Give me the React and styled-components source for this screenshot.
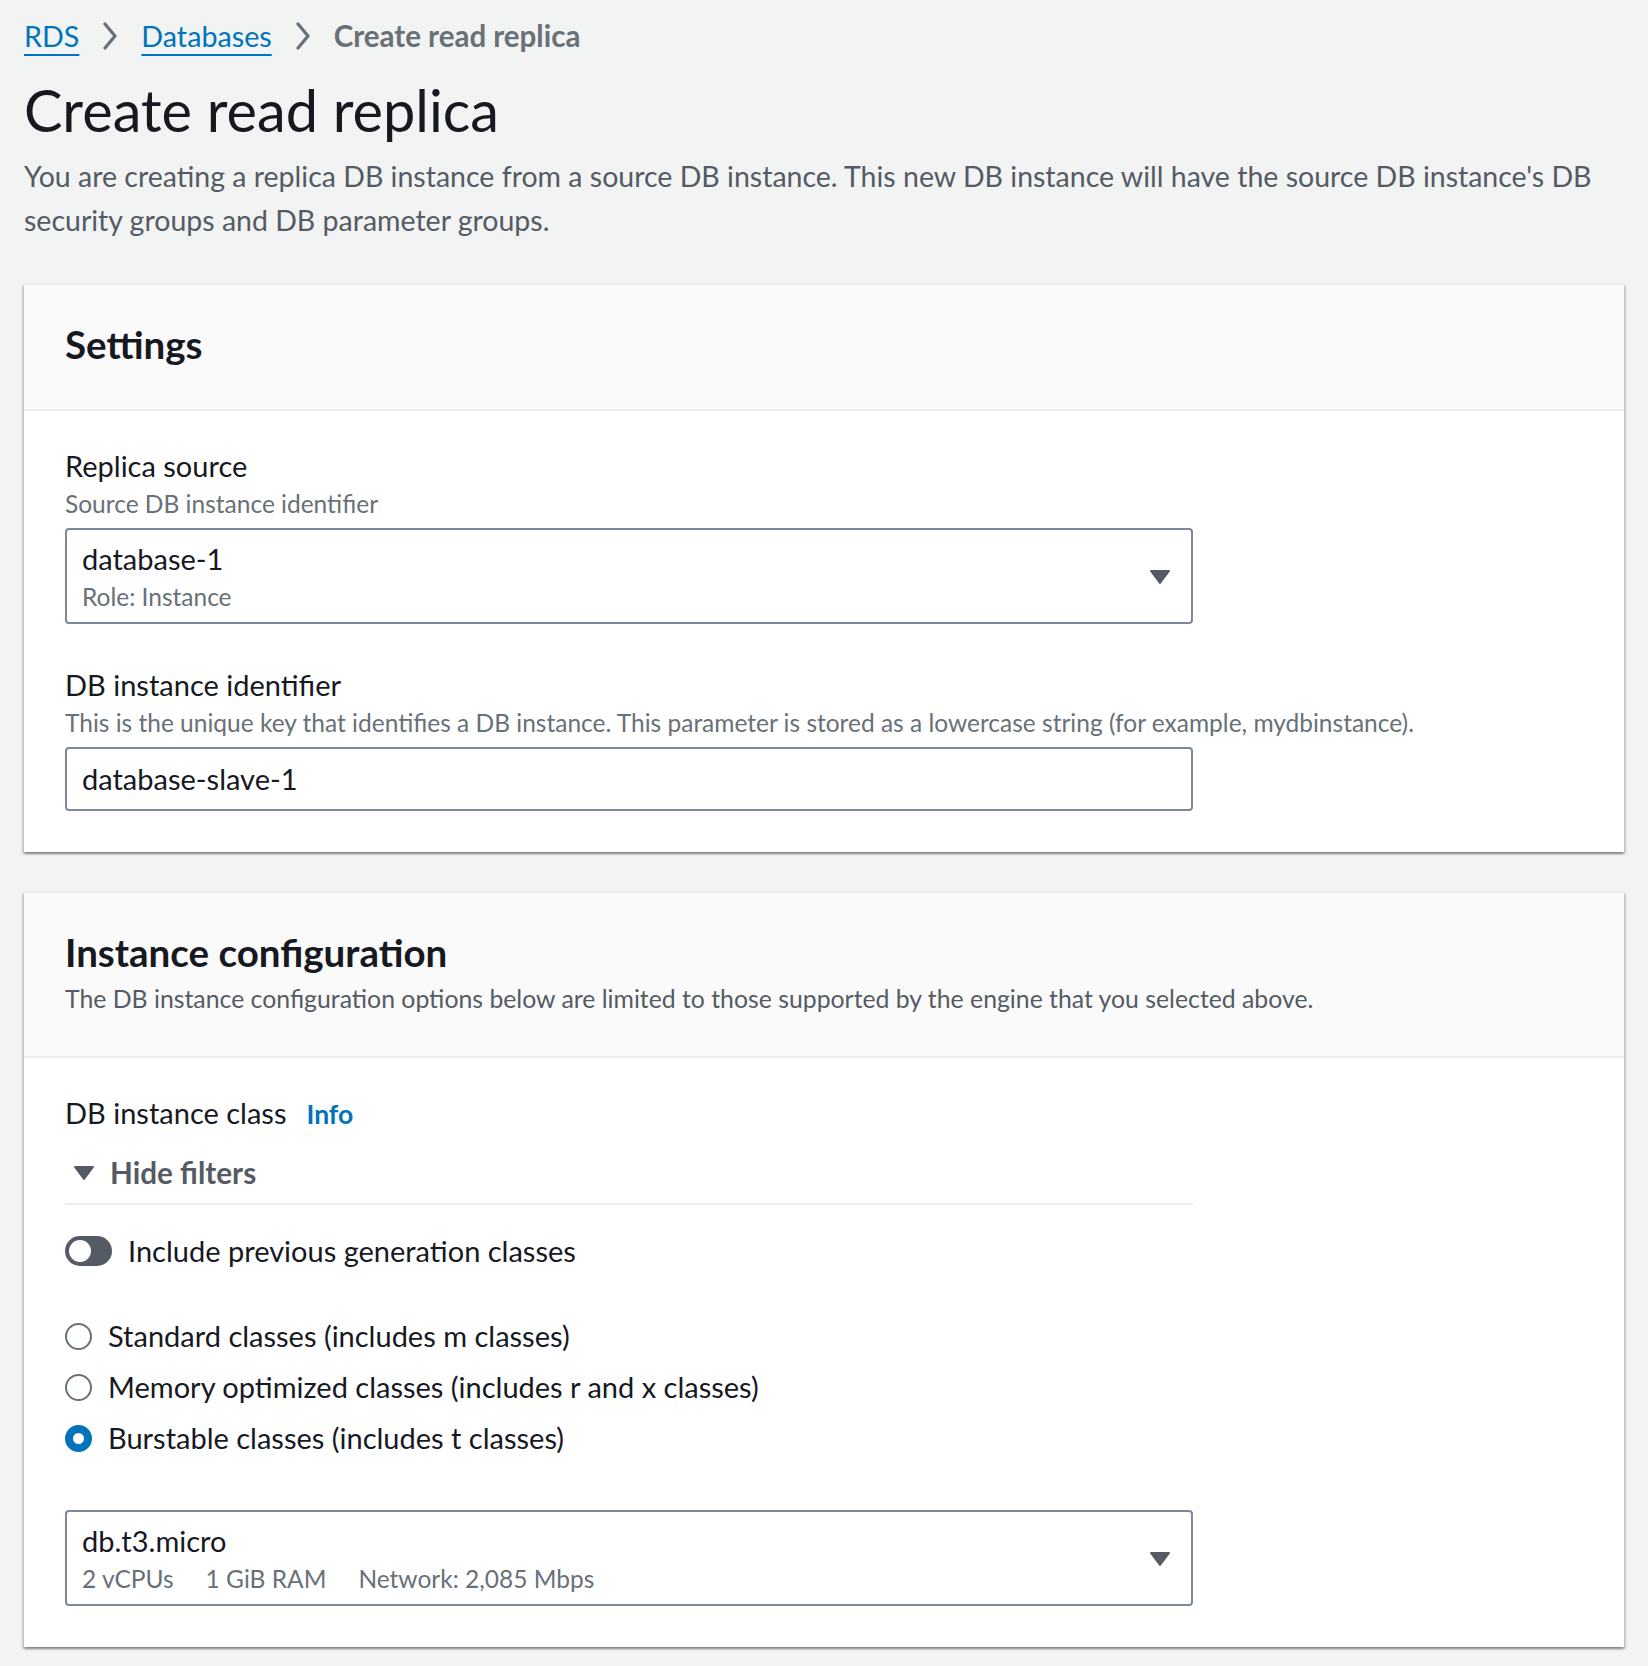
import React from "react";
import styled, { createGlobalStyle } from "styled-components";

const Global = createGlobalStyle`
  body {
    margin: 0;
    background: #f2f3f3;
    font-family: Lato, "Open Sans", sans-serif;
    color: #16191f;
  }
`;

const Page = styled.div`
  padding: 14px 24px 20px;
`;

const Crumbs = styled.nav`
  display: flex;
  align-items: center;
  gap: 23px;
  font-size: 28.7px;
  line-height: 44px;
  a {
    color: #0073bb;
    text-decoration: underline;
    text-underline-offset: 7px;
    text-decoration-thickness: 2px;
  }
  span {
    color: #687078;
    font-weight: 700;
    font-size: 29.5px;
  }
`;

const Title = styled.h1`
  margin: 16px 0 0;
  font-size: 57.7px;
  font-weight: 400;
  line-height: 72px;
`;

const Lead = styled.p`
  margin: 8px 0 0;
  font-size: 28.5px;
  line-height: 44px;
  color: #545b64;
`;

const Card = styled.section`
  margin-top: ${(p) => p.$gap}px;
  background: #fff;
  box-shadow: 0 2px 2px 0 rgba(0, 28, 36, 0.3), 2px 2px 2px 0 rgba(0, 28, 36, 0.15),
    -2px 2px 2px 0 rgba(0, 28, 36, 0.15);
  border-top: 1px solid #eaeded;
`;

const CardHead = styled.header`
  background: #fafafa;
  border-bottom: 2px solid #eaeded;
  padding: 37px 41px ${(p) => (p.$desc ? "39px" : "43px")};
  h2 {
    margin: 0;
    font-size: 38.5px;
    line-height: 44px;
    font-weight: 700;
  }
  p {
    margin: 7px 0 0;
    font-size: 24.8px;
    line-height: 36px;
    color: #545b64;
  }
`;

const CardBody = styled.div`
  padding: 35px 41px 41px;
  display: flex;
  flex-direction: column;
  align-items: flex-start;
`;

const Field = styled.div`
  margin-top: ${(p) => p.$gap || 0}px;
`;

const Label = styled.div`
  display: flex;
  align-items: baseline;
  font-size: 29px;
  line-height: 40px;
`;

const Info = styled.a`
  margin-left: 20px;
  font-size: 26.5px;
  font-weight: 700;
  color: #0073bb;
`;

const Hint = styled.div`
  font-size: 24.5px;
  line-height: 36px;
  color: #687078;
  margin-bottom: 6px;
`;

const Box = styled.div`
  box-sizing: border-box;
  width: 1128px;
  border: 2px solid #7d8998;
  border-radius: 4px;
  background: #fff;
  display: flex;
  align-items: center;
  padding: ${(p) => (p.$tall ? "9px 19px 7px 15px" : "10px 15px")};
  font-size: 29px;
`;

const BoxText = styled.div`
  flex: 1;
  line-height: 40px;
`;

const Sub = styled.div`
  font-size: 24.5px;
  line-height: 36px;
  color: #687078;
  display: flex;
  gap: 32px;
`;

const Caret = styled.svg`
  width: ${(p) => p.$w}px;
  height: ${(p) => p.$h}px;
  fill: #545b64;
  stroke: #545b64;
  stroke-width: 2;
  stroke-linejoin: round;
`;

const Expander = styled.div`
  margin-top: 17px;
  width: 1128px;
  display: flex;
  align-items: center;
  gap: 15px;
  padding: 0 0 8px 8px;
  box-sizing: border-box;
  border-bottom: 2px solid #eaeded;
  font-size: 29.7px;
  line-height: 44px;
  font-weight: 700;
  color: #545b64;
`;

const ToggleRow = styled.label`
  margin-top: 24px;
  display: flex;
  align-items: center;
  gap: 16px;
  font-size: 29px;
  line-height: 44px;
`;

const Track = styled.span`
  width: 47px;
  height: 30px;
  border-radius: 15px;
  background: #545b64;
  position: relative;
  &::after {
    content: "";
    position: absolute;
    left: 4px;
    top: 4px;
    width: 22px;
    height: 22px;
    border-radius: 50%;
    background: #fff;
  }
`;

const Radios = styled.div`
  margin-top: 41px;
  display: flex;
  flex-direction: column;
  gap: 7px;
`;

const RadioRow = styled.label`
  display: flex;
  align-items: center;
  gap: 16px;
  font-size: 29px;
  line-height: 44px;
`;

const Dot = styled.span`
  box-sizing: border-box;
  width: 27px;
  height: 27px;
  border-radius: 50%;
  border: ${(p) => (p.$on ? "8px solid #0073bb" : "2px solid #687078")};
  background: #fff;
`;

const Chevron = () => (
  <svg width="16" height="28" viewBox="0 0 16 28">
    <path d="M3 2 L13 14 L3 26" fill="none" stroke="#687078" strokeWidth="3.2" strokeLinecap="round" strokeLinejoin="round" />
  </svg>
);

const CaretDown = ({ small }) =>
  small ? (
    <Caret $w={22} $h={16} viewBox="0 0 22 16">
      <path d="M2 2 L20 2 L11 14 Z" />
    </Caret>
  ) : (
    <Caret $w={24} $h={18} viewBox="0 0 24 18">
      <path d="M3 3 L21 3 L12 15 Z" />
    </Caret>
  );

const classes = [
  { label: "Standard classes (includes m classes)", on: false },
  { label: "Memory optimized classes (includes r and x classes)", on: false },
  { label: "Burstable classes (includes t classes)", on: true },
];

export default function App() {
  return (
    <Page>
      <Global />
      <Crumbs>
        <a>RDS</a>
        <Chevron />
        <a>Databases</a>
        <Chevron />
        <span>Create read replica</span>
      </Crumbs>
      <Title>Create read replica</Title>
      <Lead>
        You are creating a replica DB instance from a source DB instance. This new DB instance will have the source DB
        instance's DB security groups and DB parameter groups.
      </Lead>

      <Card $gap={42}>
        <CardHead>
          <h2>Settings</h2>
        </CardHead>
        <CardBody>
          <Field>
            <Label>Replica source</Label>
            <Hint>Source DB instance identifier</Hint>
            <Box $tall>
              <BoxText>
                database-1
                <Sub>Role: Instance</Sub>
              </BoxText>
              <CaretDown />
            </Box>
          </Field>
          <Field $gap={41}>
            <Label>DB instance identifier</Label>
            <Hint>
              This is the unique key that identifies a DB instance. This parameter is stored as a lowercase string (for
              example, mydbinstance).
            </Hint>
            <Box>
              <BoxText>database-slave-1</BoxText>
            </Box>
          </Field>
        </CardBody>
      </Card>

      <Card $gap={40}>
        <CardHead $desc>
          <h2>Instance configuration</h2>
          <p>The DB instance configuration options below are limited to those supported by the engine that you selected above.</p>
        </CardHead>
        <CardBody>
          <Label>
            DB instance class<Info>Info</Info>
          </Label>
          <Expander>
            <CaretDown small />
            Hide filters
          </Expander>
          <ToggleRow>
            <Track />
            Include previous generation classes
          </ToggleRow>
          <Radios>
            {classes.map((c) => (
              <RadioRow key={c.label}>
                <Dot $on={c.on} />
                {c.label}
              </RadioRow>
            ))}
          </Radios>
          <Field $gap={50}>
            <Box $tall>
              <BoxText>
                db.t3.micro
                <Sub>
                  <span>2 vCPUs</span>
                  <span>1 GiB RAM</span>
                  <span>Network: 2,085 Mbps</span>
                </Sub>
              </BoxText>
              <CaretDown />
            </Box>
          </Field>
        </CardBody>
      </Card>
    </Page>
  );
}
